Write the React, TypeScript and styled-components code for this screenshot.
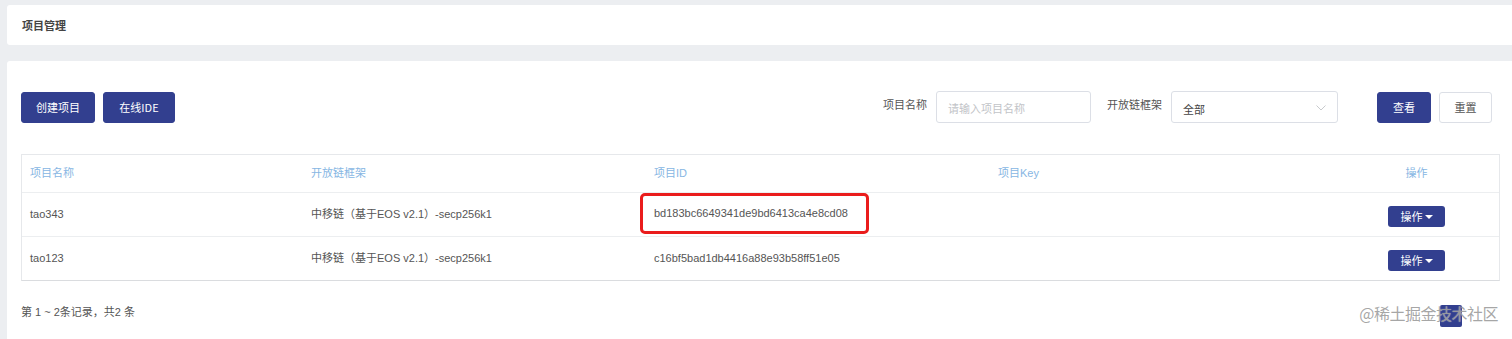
import React from "react";
import styled, { createGlobalStyle } from "styled-components";

const Global = createGlobalStyle`
  html, body { margin: 0; padding: 0; background: #eceef1; }
  body { font-family: "Liberation Sans", "Noto Sans CJK SC", sans-serif; font-size: 11px; color: #555; }
  * { box-sizing: border-box; }
`;

const Page = styled.div`
  padding: 5px 0 0 7px;
  display: flex;
  flex-direction: column;
  gap: 16px;
  position: relative;
  height: 339px;
  overflow: hidden;
`;

const TitleCard = styled.div`
  flex-shrink: 0;
  background: #fff;
  height: 40px;
  border-radius: 3px 0 0 3px;
  display: flex;
  align-items: center;
  padding-left: 15px;
  font-family: "Noto Sans CJK SC", sans-serif;
  font-size: 11px;
  font-weight: 600;
  color: #444;
`;

const MainCard = styled.div`
  flex: 1 0 auto;
  background: #fff;
  border-radius: 3px 0 0 0;
  padding: 30px 12px 0 14px;
`;

const Toolbar = styled.div`
  display: flex;
  align-items: center;
  height: 32px;
  padding-right: 8px;
`;

const Spacer = styled.div`
  flex: 1;
`;

const Button = styled.button<{ $w: number; $variant?: "primary" | "ghost" }>`
  width: ${(p) => p.$w}px;
  height: 31px;
  border-radius: 3px;
  font-family: "Noto Sans CJK SC", "Liberation Sans", sans-serif;
  font-size: 11px;
  cursor: pointer;
  padding: 0;
  border: 1px solid ${(p) => (p.$variant === "ghost" ? "#dcdfe6" : "#323f8f")};
  background: ${(p) => (p.$variant === "ghost" ? "#fff" : "#323f8f")};
  color: ${(p) => (p.$variant === "ghost" ? "#555" : "#fff")};
`;

const Label = styled.span`
  font-family: "Noto Sans CJK SC", sans-serif;
  font-size: 11px;
  color: #555;
  margin: 0 9px 0 0;
  align-self: flex-start;
  line-height: 26px;
`;

const Input = styled.div<{ $w: number }>`
  width: ${(p) => p.$w}px;
  height: 32px;
  border: 1px solid #dcdfe6;
  border-radius: 3px;
  display: flex;
  align-items: center;
  padding: 2px 11px 0 11px;
  font-family: "Noto Sans CJK SC", sans-serif;
  font-size: 11px;
  justify-content: space-between;
`;

const Placeholder = styled.span`
  color: #c2c4c8;
`;

const SelectValue = styled.span`
  color: #444;
  padding-top: 1px;
`;

const Table = styled.div`
  margin-top: 31px;
  border: 1px solid #e6e8eb;
  border-bottom-color: #dadcdf;
`;

const Row = styled.div<{ $head?: boolean }>`
  display: grid;
  grid-template-columns: 281px 343px 344px 344px 1fr;
  height: ${(p) => (p.$head ? 37 : 44)}px;
  align-items: center;
  border-top: ${(p) => (p.$head ? "none" : "1px solid #eceef0")};
  color: ${(p) => (p.$head ? "#87b6e3" : "#555")};
  font-family: "Liberation Sans", "Noto Sans CJK SC", sans-serif;
  font-size: 11px;
`;

const Cell = styled.div<{ $center?: boolean }>`
  padding-left: ${(p) => (p.$center ? 0 : 8)}px;
  line-height: 14px;
  margin-top: -2px;
  display: flex;
  justify-content: ${(p) => (p.$center ? "center" : "flex-start")};
`;

const Highlight = styled.span`
  display: inline-block;
  border: 3px solid #ea1c1c;
  border-radius: 5px;
  padding: 10px 18px 11px 11px;
  margin-left: -14px;
  line-height: 14px;
`;

const ActionBtn = styled.button`
  width: 57px;
  height: 21px;
  background: #323f8f;
  color: #fff;
  border: none;
  border-radius: 3px;
  font-family: "Noto Sans CJK SC", sans-serif;
  font-size: 11px;
  padding: 0;
  display: flex;
  align-items: center;
  justify-content: center;
  gap: 2px;
  margin-top: 5px;
`;

const Caret = styled.span`
  width: 0;
  height: 0;
  border-left: 4px solid transparent;
  border-right: 4px solid transparent;
  border-top: 4px solid #fff;
  margin-top: 1px;
`;

const Footer = styled.div`
  display: flex;
  align-items: flex-start;
  padding: 24px 38px 0 0;
  line-height: 14px;
  font-family: "Liberation Sans", "Noto Sans CJK SC", sans-serif;
  font-size: 11px;
  color: #555;
`;

const PageNum = styled.div`
  width: 22px;
  height: 22px;
  background: #323f8f;
  border-radius: 2px;
  margin-top: 0;
`;

const Watermark = styled.div`
  position: absolute;
  right: 14px;
  top: 301px;
  font-family: "Noto Sans CJK SC", sans-serif;
  font-size: 16px;
  letter-spacing: -0.5px;
  color: rgba(150, 150, 150, 0.85);
  text-shadow: 0 0 1px rgba(255, 255, 255, 0.6);
  line-height: 24px;
`;

const rows = [
  { name: "tao343", fw: "中移链（基于EOS v2.1）-secp256k1", id: "bd183bc6649341de9bd6413ca4e8cd08", hl: true },
  { name: "tao123", fw: "中移链（基于EOS v2.1）-secp256k1", id: "c16bf5bad1db4416a88e93b58ff51e05", hl: false },
];

export default function App() {
  return (
    <>
      <Global />
      <Page>
        <TitleCard>项目管理</TitleCard>
        <MainCard>
          <Toolbar>
            <Button $w={74}>创建项目</Button>
            <Button $w={72} style={{ marginLeft: 8 }}>在线IDE</Button>
            <Spacer />
            <Label>项目名称</Label>
            <Input $w={155}>
              <Placeholder>请输入项目名称</Placeholder>
            </Input>
            <Label style={{ marginLeft: 16 }}>开放链框架</Label>
            <Input $w={167}>
              <SelectValue>全部</SelectValue>
              <svg width="10" height="6" viewBox="0 0 10 6">
                <path d="M0.5 0.5 L5 5 L9.5 0.5" fill="none" stroke="#c8cacd" strokeWidth="1" />
              </svg>
            </Input>
            <Button $w={54} style={{ marginLeft: 39 }}>查看</Button>
            <Button $w={53} $variant="ghost" style={{ marginLeft: 8 }}>重置</Button>
          </Toolbar>
          <Table>
            <Row $head>
              <Cell>项目名称</Cell>
              <Cell>开放链框架</Cell>
              <Cell>项目ID</Cell>
              <Cell>项目Key</Cell>
              <Cell $center>操作</Cell>
            </Row>
            {rows.map((r) => (
              <Row key={r.name}>
                <Cell>{r.name}</Cell>
                <Cell>{r.fw}</Cell>
                <Cell>{r.hl ? <Highlight>{r.id}</Highlight> : r.id}</Cell>
                <Cell></Cell>
                <Cell $center>
                  <ActionBtn>
                    操作<Caret />
                  </ActionBtn>
                </Cell>
              </Row>
            ))}
          </Table>
          <Footer>
            <span>第 1 ~ 2条记录，共2 条</span>
            <Spacer />
            <PageNum />
          </Footer>
        </MainCard>
        <Watermark>@稀土掘金技术社区</Watermark>
      </Page>
    </>
  );
}
